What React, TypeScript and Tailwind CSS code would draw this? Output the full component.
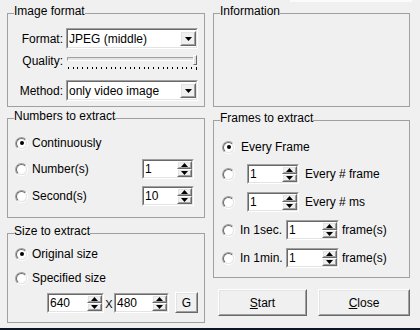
import type { ReactNode } from 'react';

const FONT = { fontFamily: '"Liberation Sans", Arial, sans-serif' };

function Group({ title, className, children }: { title: string; className: string; children?: ReactNode }) {
  return (
    <fieldset className={'border border-[#a0a0a0] min-w-0 ' + className}>
      <legend className="ml-[6px] leading-[14px] pb-[4px] text-black">{title}</legend>
      {children}
    </fieldset>
  );
}

function Arrow({ down }: { down?: boolean }) {
  return (
    <svg width="7" height="4" viewBox="0 0 7 4">
      <path d={down ? 'M0 0H7L3.5 4Z' : 'M3.5 0L7 4H0Z'} fill="#000" />
    </svg>
  );
}

// classic raised 3d edge
function Raised({ className, children }: { className: string; children?: ReactNode }) {
  return (
    <div className={'border border-t-white border-l-white border-r-[#696969] border-b-[#696969] ' + className}>
      <div className="w-full h-full border border-t-[#e3e3e3] border-l-[#e3e3e3] border-r-[#a0a0a0] border-b-[#a0a0a0] bg-[#f0f0f0] flex items-center justify-center">
        {children}
      </div>
    </div>
  );
}

function Sunken({ className, children }: { className: string; children?: ReactNode }) {
  return (
    <div className={'border border-t-[#a0a0a0] border-l-[#a0a0a0] border-r-white border-b-white ' + className}>
      <div className="w-full h-full border border-t-[#696969] border-l-[#696969] border-r-[#e3e3e3] border-b-[#e3e3e3] bg-white flex items-center">
        {children}
      </div>
    </div>
  );
}

function Combo({ value }: { value: string }) {
  return (
    <Sunken className="w-[132px] h-[21px]">
      <span className="flex-1 pl-[1px] leading-[14px]">{value}</span>
      <Raised className="w-[16px] h-[15px]">
        <Arrow down />
      </Raised>
    </Sunken>
  );
}

function Spin({ value, w }: { value: string; w: string }) {
  return (
    <div className={'border border-t-[#a0a0a0] border-l-[#a0a0a0] border-r-white border-b-white h-[20px] ' + w}>
      <div className="w-full h-full border border-t-[#696969] border-l-[#696969] border-r-[#e3e3e3] border-b-[#e3e3e3] bg-white flex">
        <span className="flex-1 pl-[1px] leading-[16px]">{value}</span>
        <div className="w-[15px] flex flex-col">
          <Raised className="w-[15px] h-[8px]">
            <Arrow />
          </Raised>
          <Raised className="w-[15px] h-[8px]">
            <Arrow down />
          </Raised>
        </div>
      </div>
    </div>
  );
}

function Radio({ checked }: { checked?: boolean }) {
  return (
    <div className="w-[13px] h-[13px] shrink-0 rounded-full border border-t-[#a0a0a0] border-l-[#a0a0a0] border-r-white border-b-white">
      <div className="w-full h-full rounded-full border border-t-[#696969] border-l-[#696969] border-r-[#e3e3e3] border-b-[#e3e3e3] bg-white flex items-center justify-center">
        {checked && <div className="w-[4px] h-[4px] rounded-full bg-black" />}
      </div>
    </div>
  );
}

function Slider() {
  return (
    <div className="relative w-[130px] pt-[8px]">
      <div className="h-[4px] border border-t-[#a0a0a0] border-l-[#a0a0a0] border-r-white border-b-white bg-[#e3e3e3]" />
      <div className="absolute right-0 top-[6px] w-[4px] h-[10px] border border-t-white border-l-white border-r-[#696969] border-b-[#696969] bg-[#e3e3e3]" />
      <div className="mt-[6px] flex justify-between h-[3px] pl-[1px]">
        {Array.from({ length: 28 }).map((_, i) => (
          <div key={i} className={'w-px bg-black ' + (i === 27 ? 'h-[3px]' : 'h-[2px]')} />
        ))}
      </div>
    </div>
  );
}

export default function App() {
  return (
    <div className="w-[420px] h-[330px] flex flex-col bg-[#f0f0f0] text-[12px] text-black overflow-hidden" style={FONT}>
      <div className="h-[2px] flex">
        <div className="ml-[290px] w-[122px] bg-[#fbfbfb]" />
      </div>

      <div className="flex-1 flex px-[7px] gap-[8px]">
        {/* left column */}
        <div className="w-[198px] flex flex-col">
          <Group title="Image format" className="mt-[2px] h-[103px]">
            <div className="mt-[6px] h-[21px] flex items-center">
              <span className="w-[55px] text-right">Format:</span>
              <div className="ml-[3px]"><Combo value="JPEG (middle)" /></div>
            </div>
            <div className="h-[31px] flex">
              <span className="w-[55px] text-right pt-[5px] leading-[14px]">Quality:</span>
              <div className="ml-[4px]"><Slider /></div>
            </div>
            <div className="h-[21px] flex items-center">
              <span className="w-[55px] text-right">Method:</span>
              <div className="ml-[3px]"><Combo value="only video image" /></div>
            </div>
          </Group>

          <Group title="Numbers to extract" className="mt-[2px] h-[109px]">
            <div className="mt-[6px] h-[20px] flex items-center pl-[7px]">
              <Radio checked />
              <span className="ml-[4px]">Continuously</span>
            </div>
            <div className="mt-[6px] h-[20px] flex items-center pl-[7px]">
              <Radio />
              <span className="ml-[4px]">Number(s)</span>
              <div className="ml-auto mr-[10px]"><Spin value="1" w="w-[52px]" /></div>
            </div>
            <div className="mt-[7px] h-[20px] flex items-center pl-[7px]">
              <Radio />
              <span className="ml-[4px]">Second(s)</span>
              <div className="ml-auto mr-[10px]"><Spin value="10" w="w-[52px]" /></div>
            </div>
          </Group>

          <Group title="Size to extract" className="mt-[6px] h-[99px]">
            <div className="mt-[2px] h-[20px] flex items-center pl-[7px]">
              <Radio checked />
              <span className="ml-[4px]">Original size</span>
            </div>
            <div className="mt-[4px] h-[20px] flex items-center pl-[7px]">
              <Radio />
              <span className="ml-[4px]">Specified size</span>
            </div>
            <div className="mt-[4px] h-[21px] flex items-center pl-[39px]">
              <Spin value="640" w="w-[57px]" />
              <span className="w-[10px] text-center pt-[3px] text-[11px]">X</span>
              <Spin value="480" w="w-[55px]" />
              <Raised className="ml-[6px] w-[23px] h-[21px]">G</Raised>
            </div>
          </Group>
        </div>

        {/* right column */}
        <div className="w-[197px] flex flex-col">
          <Group title="Information" className="mt-[2px] h-[103px]" />

          <Group title="Frames to extract" className="mt-[4px] h-[167px]">
            <div className="mt-[8px] h-[20px] flex items-center pl-[8px]">
              <Radio checked />
              <span className="ml-[6px]">Every Frame</span>
            </div>
            <div className="mt-[7px] h-[20px] flex items-center pl-[8px]">
              <Radio />
              <div className="ml-[12px]"><Spin value="1" w="w-[52px]" /></div>
              <span className="ml-[6px]">Every # frame</span>
            </div>
            <div className="mt-[8px] h-[20px] flex items-center pl-[8px]">
              <Radio />
              <div className="ml-[12px]"><Spin value="1" w="w-[52px]" /></div>
              <span className="ml-[6px]">Every # ms</span>
            </div>
            <div className="mt-[8px] h-[20px] flex items-center pl-[8px]">
              <Radio />
              <span className="ml-[5px] w-[46px]">In 1sec.</span>
              <Spin value="1" w="w-[53px]" />
              <span className="ml-[3px]">frame(s)</span>
            </div>
            <div className="mt-[8px] h-[20px] flex items-center pl-[8px]">
              <Radio />
              <span className="ml-[5px] w-[46px]">In 1min.</span>
              <Spin value="1" w="w-[53px]" />
              <span className="ml-[3px]">frame(s)</span>
            </div>
          </Group>

          <div className="mt-[11px] h-[27px] flex">
            <Raised className="ml-[5px] w-[90px] h-[27px]">
              <span><u>S</u>tart</span>
            </Raised>
            <Raised className="ml-[11px] w-[93px] h-[27px]">
              <span><u>C</u>lose</span>
            </Raised>
          </div>
        </div>
      </div>

      <div className="h-[2px] bg-[#0c1526]" />
    </div>
  );
}
